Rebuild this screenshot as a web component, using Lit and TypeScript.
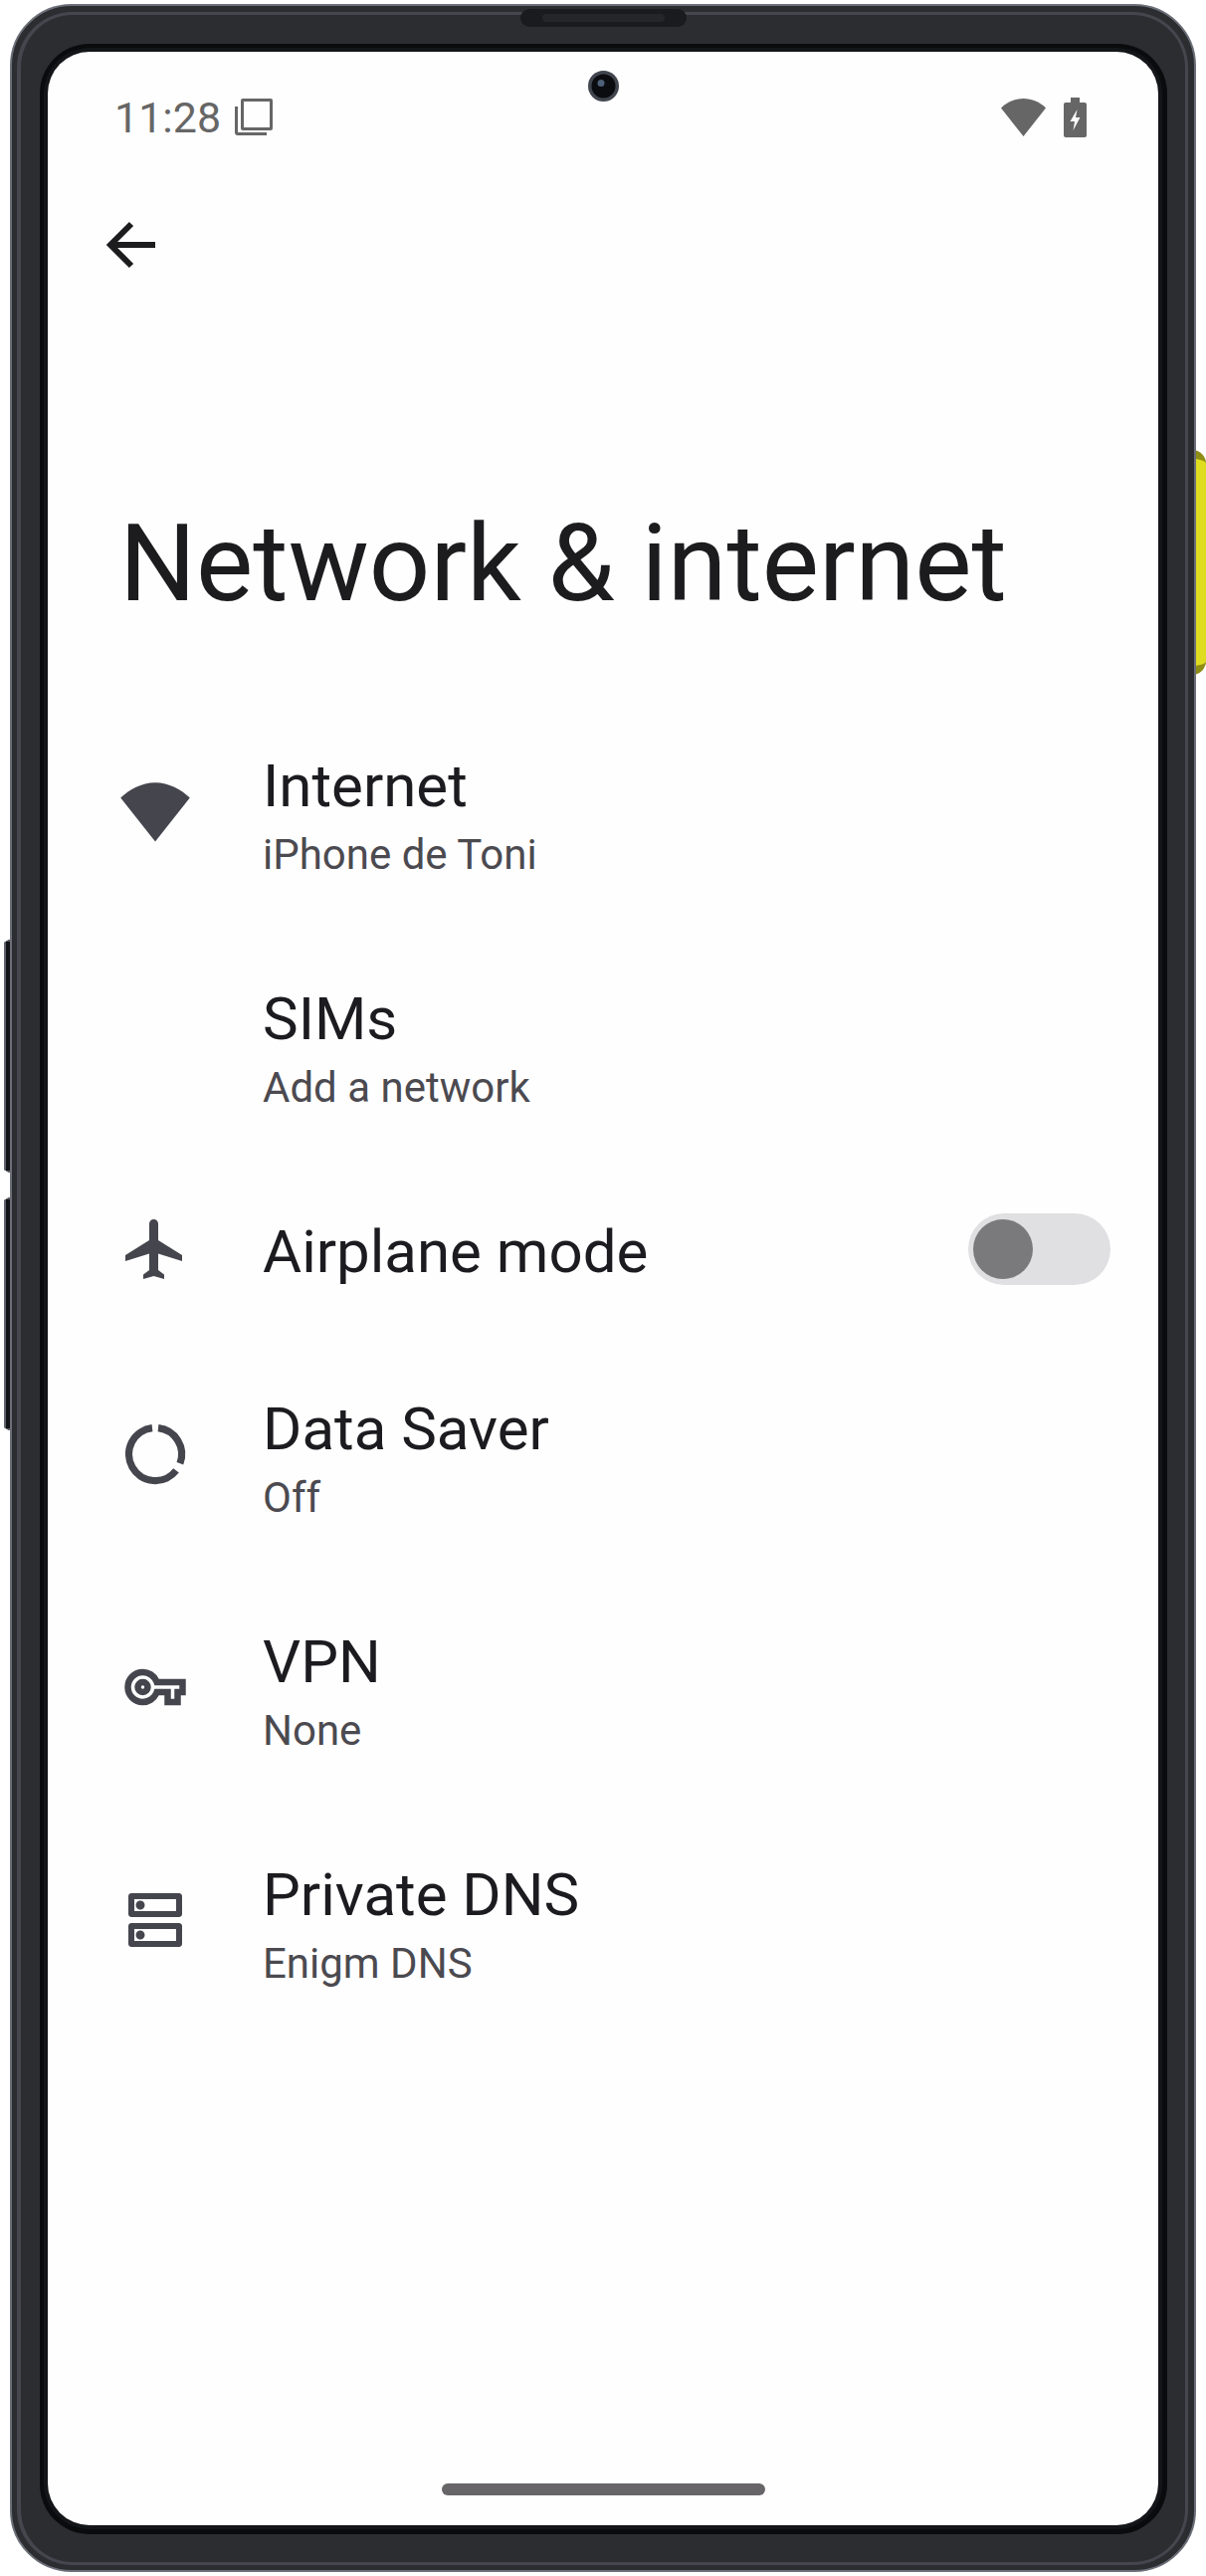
import { LitElement, html, css, svg } from "lit";
import { customElement } from "lit/decorators.js";

const icons: Record<string, unknown> = {
  wifi: svg`<path d="M0.4 14.1C3.4 11.3 7.4 9 12 9s8.6 2.3 11.6 5.1L12 28.8z" transform="translate(0 -6.6)"/>`,
  plane: svg`<path d="M21 16v-2l-8-5V3.5c0-.83-.67-1.5-1.5-1.5S10 2.67 10 3.5V9l-8 5v2l8-2.5V19l-2 1.5V22l3.5-1 3.5 1v-1.5L13 19v-5.5l8 2.5z"/>`,
  saver: svg`<path class="arc" d="M13 3.21A8.85 8.85 0 0 1 20.3 15.1M19 17.45A8.85 8.85 0 1 1 11 3.21"/>`,
  key: svg`<path class="bold" transform="translate(2 2) scale(.8333)" d="M22 19h-6v-4h-2.68c-1.14 2.42-3.6 4-6.32 4-3.86 0-7-3.14-7-7s3.14-7 7-7c2.72 0 5.17 1.58 6.32 4H24v6h-2v4zm-4-2h2v-4h2v-2H11.94l-.23-.67C11.01 8.34 9.11 7 7 7c-2.76 0-5 2.24-5 5s2.24 5 5 5c2.11 0 4.01-1.34 4.71-3.33l.23-.67H18v4zM7 15c-1.65 0-3-1.35-3-3s1.35-3 3-3 3 1.35 3 3-1.35 3-3 3zm0-4c-.55 0-1 .45-1 1s.45 1 1 1 1-.45 1-1-.45-1-1-1z"/>`,
  dns: svg`<path d="M19 15v4H5v-4h14m1-2H4c-.55 0-1 .45-1 1v6c0 .55.45 1 1 1h16c.55 0 1-.45 1-1v-6c0-.55-.45-1-1-1zM7 18.5c-.82 0-1.5-.67-1.5-1.5s.68-1.5 1.5-1.5 1.5.67 1.5 1.5-.68 1.5-1.5 1.5zM19 5v4H5V5h14m1-2H4c-.55 0-1 .45-1 1v6c0 .55.45 1 1 1h16c.55 0 1-.45 1-1V4c0-.55-.45-1-1-1zM7 8.5c-.82 0-1.5-.67-1.5-1.5S6.18 5.5 7 5.5s1.5.67 1.5 1.5S7.82 8.5 7 8.5z"/>`,
};

const rows = [
  { icon: "wifi", title: "Internet", sub: "iPhone de Toni" },
  { icon: "", title: "SIMs", sub: "Add a network" },
  { icon: "plane", title: "Airplane mode", sub: "", toggle: true },
  { icon: "saver", title: "Data Saver", sub: "Off" },
  { icon: "key", title: "VPN", sub: "None" },
  { icon: "dns", title: "Private DNS", sub: "Enigm DNS" },
];

@customElement("app-root")
export class AppRoot extends LitElement {
  static styles = css`
    :host {
      display: block;
      position: relative;
      width: 1212px;
      height: 2588px;
      background: #fff;
      font-family: Roboto, "Liberation Sans", sans-serif;
      overflow: hidden;
    }
    .power {
      position: absolute;
      left: 1190px;
      top: 452px;
      width: 22px;
      height: 226px;
      box-sizing: border-box;
      background: #dfdd20;
      border: 9px solid #8f8e14;
      border-width: 9px 0;
      border-radius: 0 14px 14px 0;
    }
    .vol {
      position: absolute;
      left: 4px;
      width: 12px;
      height: 234px;
      box-sizing: border-box;
      background: #111316;
      border: 2px solid #5f636c;
      border-right: 0;
      clip-path: polygon(0 3px, 5px 0, 100% 0, 100% 100%, 5px 100%, 0 calc(100% - 3px));
    }
    .v1 { top: 944px; }
    .v2 { top: 1203px; }
    .edge {
      position: absolute;
      left: 10px;
      top: 4px;
      width: 1192px;
      height: 2580px;
      box-sizing: border-box;
      display: flex;
      border: 2px solid #6b6f78;
      border-radius: 62px;
      background: #2c2d31;
      padding: 6px 6px 5px 5px;
    }
    .ring {
      flex: 1;
      display: flex;
      border: 3px solid #45464e;
      border-left-width: 4px;
      border-radius: 56px;
      padding: 29px 18px 28px 19px;
    }
    .bezel {
      flex: 1;
      display: flex;
      background: #0a0b0d;
      border-radius: 50px;
      padding: 8px 9px 9px 8px;
    }
    .screen {
      flex: 1;
      display: flex;
      flex-direction: column;
      background: #fffeff;
      border-radius: 42px;
      box-shadow: 0 0 0 4px #141518;
      overflow: hidden;
    }
    .ear {
      position: absolute;
      left: 523px;
      top: 9px;
      width: 167px;
      height: 18px;
      box-sizing: border-box;
      padding: 5px 22px;
      display: flex;
      background: #1a1b1f;
      border-radius: 9px;
    }
    .ear i {
      flex: 1;
      background: #25262a;
      border-radius: 5px;
    }
    .cam {
      position: absolute;
      left: 591px;
      top: 70.5px;
      width: 31px;
      height: 31px;
    }
    .status {
      display: flex;
      align-items: center;
      height: 40px;
      padding: 46px 72px 0 67px;
      color: #666;
      font-size: 43px;
    }
    .time { line-height: 42px; margin-right: 14px; }
    .status svg { display: block; fill: #666; }
    .spacer { flex: 1; }
    .wifi-s { margin-right: 18px; }
    .back {
      display: block;
      margin: 72px 0 0 48px;
      width: 72px;
      height: 72px;
      flex: none;
    }
    h1 {
      margin: 219px 0 0 72px;
      font-size: 108px;
      line-height: 130px;
      font-weight: 400;
      color: #1c1b1d;
    }
    .list {
      margin-top: 67px;
      display: flex;
      flex-direction: column;
    }
    .row {
      display: flex;
      align-items: center;
      padding: 58px 48px 40px 72px;
      position: relative;
    }
    .row.single { padding-top: 58px; padding-bottom: 53px; }
    .ico {
      position: absolute;
      left: 72px;
      top: 50%;
      margin-top: -36px;
      width: 72px;
      height: 72px;
      fill: #45454e;
    }
    .bold { stroke: #45454e; stroke-width: 0.6; }
    .arc { fill: none; stroke: #45454e; stroke-width: 2.4; }
    .text {
      margin-left: 144px;
      flex: 1;
    }
    .t {
      font-size: 60px;
      line-height: 67px;
      color: #1c1b1f;
    }
    .s {
      margin-top: 2px;
      font-size: 42px;
      line-height: 67px;
      color: #4b4a50;
    }
    .toggle {
      position: absolute;
      right: 48px;
      top: 50%;
      margin-top: -36px;
      width: 143px;
      height: 72px;
      border-radius: 36px;
      background: #e0dfe1;
      display: flex;
      align-items: center;
      padding-left: 5px;
      box-sizing: border-box;
    }
    .toggle i {
      width: 60px;
      height: 60px;
      border-radius: 50%;
      background: #7a797b;
    }
    .home {
      margin: auto 0 30px 396px;
      width: 325px;
      height: 12px;
      border-radius: 6px;
      background: #676568;
    }
  `;

  render() {
    return html`
      <div class="power"></div>
      <div class="vol v1"></div>
      <div class="vol v2"></div>
      <div class="edge">
        <div class="ring">
          <div class="bezel">
            <div class="screen">
              <div class="status">
                <span class="time">11:28</span>
                <svg width="38" height="38" viewBox="0 0 38 38">
                  <path fill-rule="evenodd" d="M8 0h28a2 2 0 0 1 2 2v28a2 2 0 0 1-2 2H8a2 2 0 0 1-2-2V2a2 2 0 0 1 2-2zm1 3v26h26V3z"/>
                  <path d="M0 8h3v26h29v3H3a3 3 0 0 1-3-3z"/>
                </svg>
                <span class="spacer"></span>
                <svg class="wifi-s" width="45" height="38" viewBox="0 0 45 38">
                  <path d="M0 9.5C6 3.5 14 0 22.5 0S39 3.5 45 9.5L22.5 38z"/>
                </svg>
                <svg width="23" height="40" viewBox="0 0 23 40">
                  <path d="M7 0h9v5h5a2 2 0 0 1 2 2v31a2 2 0 0 1-2 2H2a2 2 0 0 1-2-2V7a2 2 0 0 1 2-2h5z"/>
                  <path fill="#fff" d="M13.5 12 6.5 24h4.5l-1.5 9 7-13h-4.5z"/>
                </svg>
              </div>
              <svg class="back" viewBox="0 0 72 72">
                <path d="M60 36H15M36 15 15 36l21 21" fill="none" stroke="#1c1b1d" stroke-width="6"/>
              </svg>
              <h1>Network &amp; internet</h1>
              <div class="list">
                ${rows.map(
                  (r) => html`
                    <div class="row ${r.sub ? "" : "single"}">
                      ${r.icon
                        ? html`<svg class="ico" viewBox="0 0 24 24">${icons[r.icon]}</svg>`
                        : ""}
                      <div class="text">
                        <div class="t">${r.title}</div>
                        ${r.sub ? html`<div class="s">${r.sub}</div>` : ""}
                      </div>
                      ${r.toggle ? html`<div class="toggle"><i></i></div>` : ""}
                    </div>
                  `
                )}
              </div>
              <div class="home"></div>
            </div>
          </div>
        </div>
      </div>
      <div class="ear"><i></i></div>
      <svg class="cam" viewBox="0 0 31 31">
        <circle cx="15.5" cy="15.5" r="15.5" fill="#41454e"/>
        <circle cx="15.5" cy="15.5" r="12" fill="#0b0c10"/>
        <circle cx="13" cy="12.5" r="3.5" fill="#4f6178"/>
      </svg>
    `;
  }
}
